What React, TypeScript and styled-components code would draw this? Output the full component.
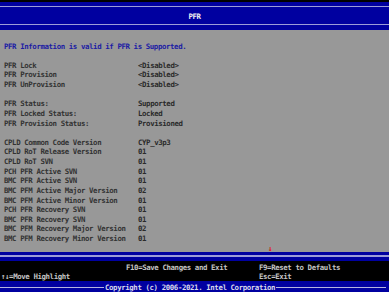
import React from "react";
import styled, { createGlobalStyle } from "styled-components";

const GlobalStyle = createGlobalStyle`
  html, body {
    margin: 0;
    padding: 0;
    background: #000;
    overflow: hidden;
  }
`;

const Screen = styled.div`
  width: 389px;
  height: 292px;
  display: flex;
  flex-direction: column;
  background: #000;
  font-family: "DejaVu Sans Mono", "Liberation Mono", monospace;
  font-size: 7.4px;
  font-weight: bold;
  letter-spacing: -0.4px;
  white-space: pre;
`;

const TopGap = styled.div`
  height: 2px;
  background: #000;
`;

const Header = styled.div`
  height: 28px;
  box-sizing: border-box;
  padding: 4px 0 5px;
  background: #0000a0;
`;

const TitleBar = styled.div`
  height: 19px;
  box-sizing: border-box;
  padding-top: 1px;
  border-top: 1px solid #9c9cd8;
  border-bottom: 1px solid #9c9cd8;
  display: flex;
  align-items: center;
  justify-content: center;
  color: #f0f0f0;
`;

const Body = styled.div`
  flex: 1;
  min-height: 0;
  overflow: hidden;
  background: #989898;
  padding: 11.5px 0 0 4px;
  box-sizing: border-box;
`;

const Row = styled.div`
  height: 9.64px;
  line-height: 9.64px;
  display: grid;
  grid-template-columns: 134px 1fr;
`;

const InfoRow = styled(Row)`
  color: #1c1ca4;
`;

const Label = styled.span`
  color: #333333;
`;

const Value = styled.span`
  color: #2a2a2a;
`;

const ScrollRow = styled.div`
  height: 9.64px;
  line-height: 9.64px;
  padding-left: 264px;
  color: #e01010;
`;

const Divider = styled.div`
  height: 9px;
  box-sizing: border-box;
  padding: 3px 0 4px;
  background: #0000a0;
`;

const DividerLine = styled.div`
  height: 2px;
  background: #9c9cd8;
`;

const Footer = styled.div`
  height: 20px;
  box-sizing: border-box;
  padding: 1.5px 0 0 1px;
  background: #000;
  display: grid;
  grid-template-columns: 125px 133px 1fr;
  grid-auto-rows: 9.4px;
  line-height: 9.4px;
  color: #c4c4c4;
`;

const CopyrightBar = styled.div`
  height: 11px;
  padding-top: 1px;
  box-sizing: border-box;
  background: #0000a0;
  display: flex;
  align-items: center;
  gap: 1px;
  padding-right: 3px;
`;

const Rule = styled.div<{ $width?: number }>`
  height: 1px;
  background: #b4b4e0;
  flex: ${(p) => (p.$width ? `0 0 ${p.$width}px` : "1")};
`;

const CopyrightText = styled.span`
  color: #d8d8ec;
`;

type Item = [string, string] | null;

const items: Item[] = [
  null,
  ["PFR Lock", "<Disabled>"],
  ["PFR Provision", "<Disabled>"],
  ["PFR UnProvision", "<Disabled>"],
  null,
  ["PFR Status:", "Supported"],
  ["PFR Locked Status:", "Locked"],
  ["PFR Provision Status:", "Provisioned"],
  null,
  ["CPLD Common Code Version", "CYP_v3p3"],
  ["CPLD RoT Release Version", "01"],
  ["CPLD RoT SVN", "01"],
  ["PCH PFR Active SVN", "01"],
  ["BMC PFR Active SVN", "01"],
  ["BMC PFM Active Major Version", "02"],
  ["BMC PFM Active Minor Version", "01"],
  ["PCH PFR Recovery SVN", "01"],
  ["BMC PFR Recovery SVN", "01"],
  ["BMC PFM Recovery Major Version", "02"],
  ["BMC PFM Recovery Minor Version", "01"],
];

export default function App() {
  return (
    <>
      <GlobalStyle />
      <Screen>
        <TopGap />
        <Header>
          <TitleBar>PFR</TitleBar>
        </Header>
        <Body>
          <InfoRow>PFR Information is valid if PFR is Supported.</InfoRow>
          {items.map((item, i) =>
            item ? (
              <Row key={i}>
                <Label>{item[0]}</Label>
                <Value>{item[1]}</Value>
              </Row>
            ) : (
              <Row key={i} />
            )
          )}
          <ScrollRow>↓</ScrollRow>
        </Body>
        <Divider>
          <DividerLine />
        </Divider>
        <Footer>
          <span />
          <span>F10=Save Changes and Exit</span>
          <span>F9=Reset to Defaults</span>
          <span>↑↓=Move Highlight</span>
          <span />
          <span>Esc=Exit</span>
        </Footer>
        <CopyrightBar>
          <Rule $width={104} />
          <CopyrightText>Copyright (c) 2006-2021. Intel Corporation</CopyrightText>
          <Rule />
        </CopyrightBar>
      </Screen>
    </>
  );
}
